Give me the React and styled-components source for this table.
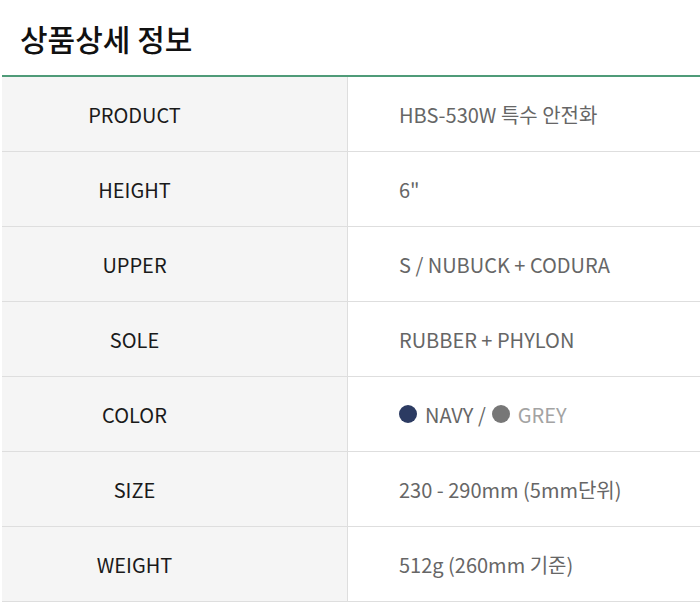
import styled, { createGlobalStyle } from "styled-components";

const GlobalStyle = createGlobalStyle`
  body {
    margin: 0;
    background: #fff;
    font-family: "Noto Sans CJK KR", "Noto Sans", sans-serif;
  }
`;

const Wrap = styled.div`
  width: 700px;
  padding-left: 2px;
  box-sizing: border-box;
`;

const Title = styled.h2`
  margin: 0;
  padding: 16px 0 0 18px;
  height: 60px;
  font-size: 30px;
  font-weight: 500;
  color: #111;
  line-height: 44px;
  box-sizing: border-box;
`;

const Table = styled.div`
  margin-top: 15px;
  border-top: 2px solid #4f9b78;
`;

const Row = styled.div`
  display: grid;
  grid-template-columns: 346px 1fr;
  height: 75px;
  border-bottom: 1px solid #dedede;
  box-sizing: border-box;
`;

const Label = styled.div`
  display: flex;
  align-items: center;
  justify-content: center;
  padding-right: 80px;
  background: #f5f5f5;
  border-right: 1px solid #dedede;
  font-size: 20px;
  color: #1a1a1a;
`;

const Value = styled.div`
  display: flex;
  align-items: center;
  gap: 6px;
  padding-left: 51px;
  font-size: 20px;
  color: #666;
`;

const Dot = styled.span`
  width: 18px;
  height: 18px;
  border-radius: 50%;
  background: ${(props) => props.color};
  margin-right: 2px;
`;

const Light = styled.span`
  color: ${(props) => props.color || "inherit"};
`;

const rows = [
  ["PRODUCT", "HBS-530W 특수 안전화"],
  ["HEIGHT", '6"'],
  ["UPPER", "S / NUBUCK + CODURA"],
  ["SOLE", "RUBBER + PHYLON"],
  ["COLOR", null],
  ["SIZE", "230 - 290mm (5mm단위)"],
  ["WEIGHT", "512g (260mm 기준)"],
];

export default function App() {
  return (
    <Wrap>
      <GlobalStyle />
      <Title>상품상세 정보</Title>
      <Table>
        {rows.map(([k, v]) => (
          <Row key={k}>
            <Label>{k}</Label>
            <Value>
              {v ?? (
                <>
                  <Dot color="#2c3b62" />
                  <Light>NAVY /</Light>
                  <Dot color="#777" />
                  <Light color="#a3a3a3">GREY</Light>
                </>
              )}
            </Value>
          </Row>
        ))}
      </Table>
    </Wrap>
  );
}
